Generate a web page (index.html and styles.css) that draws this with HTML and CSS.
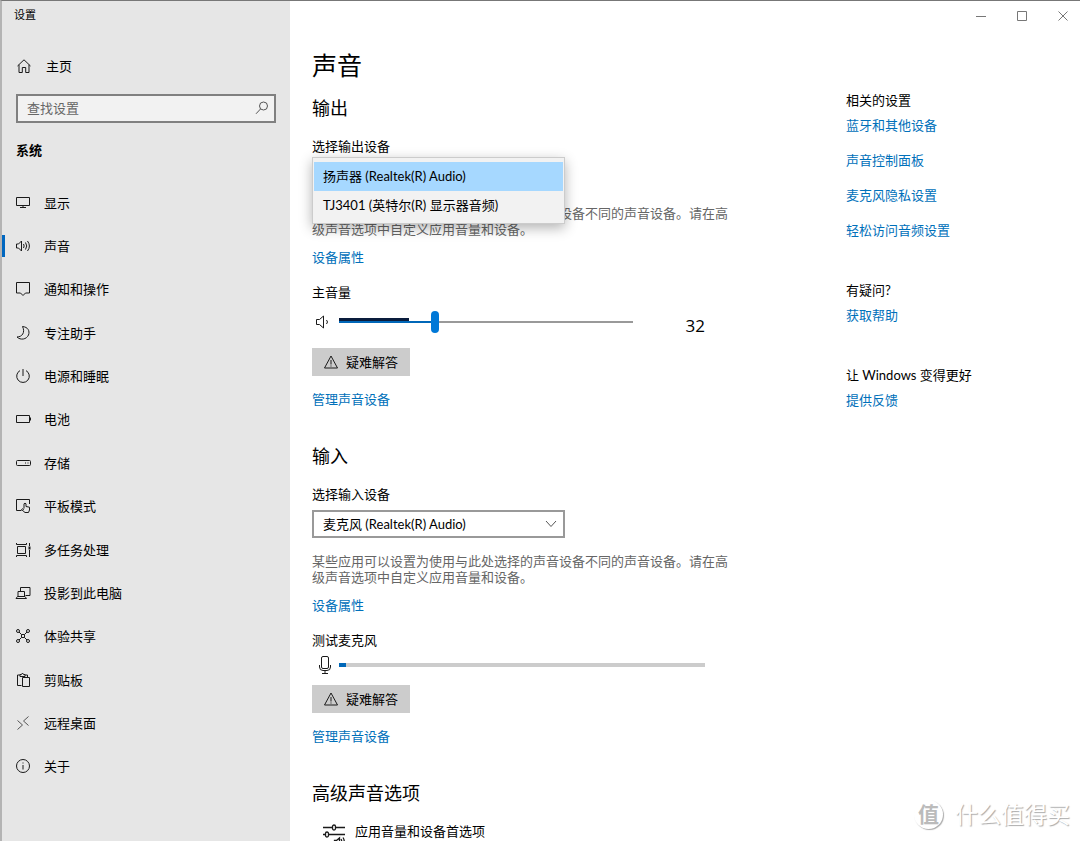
FILE: index.html
```html
<!DOCTYPE html>
<html lang="zh-CN">
<head>
<meta charset="utf-8">
<title>设置</title>
<link rel="stylesheet" href="styles.css">
</head>
<body>
<div class="window">
  <aside class="sidebar">
    <div class="app-title">设置</div>
    <a class="home" href="#"><svg class="icon" viewBox="0 0 16 16"><path d="M1.500 8 8 1.800 14.500 8M3 6.800V14.500H6.300V9.500H9.700V14.500H13V6.800"/></svg>主页</a>
    <div class="search">
      <input type="text" placeholder="查找设置" aria-label="查找设置">
      <svg class="icon search-icon" viewBox="0 0 16 16"><circle cx="9.500" cy="6" r="4"/><path d="M6.500 9 2 13.800"/></svg>
    </div>
    <h2 class="group">系统</h2>
    <nav class="nav">
      <a href="#"><svg class="icon" viewBox="0 0 16 16"><path d="M1.500 2.500H14.500V10.500H1.500ZM8 10.500V12.500M5 12.500H11"/></svg>显示</a>
      <a href="#" class="active"><svg class="icon" viewBox="0 0 16 16"><path d="M1.500 6H3.500L6.500 3V13L3.500 10H1.500ZM8.500 6Q9.800 8 8.500 10M10.500 4.500Q13 8 10.500 11.500M12.500 3Q16.300 8 12.500 13"/></svg>声音</a>
      <a href="#"><svg class="icon" viewBox="0 0 16 16"><path d="M1.500 1.500H14.500V12H10.500L8 14.500 5.500 12H1.500Z"/></svg>通知和操作</a>
      <a href="#"><svg class="icon" viewBox="0 0 16 16"><path d="M7.500 1.500C13 2 15 6 13.500 10 11.500 14.500 5.500 15.500 2 12 7 12 10.500 7.500 7.500 1.500Z"/></svg>专注助手</a>
      <a href="#"><svg class="icon" viewBox="0 0 16 16"><path d="M8 1V8M5 2.600A6.300 6.300 0 1 0 11 2.600"/></svg>电源和睡眠</a>
      <a href="#"><svg class="icon" viewBox="0 0 16 16"><path d="M1.500 4.500H14.500V11.500H1.500ZM15.500 6.500V9.500"/></svg>电池</a>
      <a href="#"><svg class="icon" viewBox="0 0 16 16"><rect x="1.500" y="5.500" width="14" height="5" rx="1"/><path d="M10 8H11M12.500 8H13.500"/></svg>存储</a>
      <a href="#"><svg class="icon" viewBox="0 0 16 16"><path d="M6.500 12.500H1.500V1.500H14.500V6M9 10.500V5.800Q10 4.500 11 5.800V8.500L14.500 9.200V12L13.500 14.500H10L6.500 11.500Q7 10 9 11.500"/></svg>平板模式</a>
      <a href="#"><svg class="icon" viewBox="0 0 16 16"><path d="M2.500 4.500H10.500V11.500H2.500ZM1.500 1V2.500H11.500V1M1.500 15V13.500H11.500V15M14.500 1V4M14.500 8V15"/><path d="M14.500 4.500V7.500" stroke-width="2"/></svg>多任务处理</a>
      <a href="#"><svg class="icon" viewBox="0 0 16 16"><path d="M5.500 6V2.500H15V10.500H10.500M3 11.500V6.500H9.500V11.500M1 13.500H11.500L10 11.500H2.500Z"/></svg>投影到此电脑</a>
      <a href="#"><svg class="icon" viewBox="0 0 16 16"><circle cx="3" cy="3" r="1.500"/><circle cx="13" cy="3" r="1.500"/><circle cx="3" cy="13" r="1.500"/><circle cx="13" cy="13" r="1.500"/><path d="M4 4 6.500 6.500H9.500L12 4M4 12 6.500 9.500H9.500L12 12M6.500 6.500V9.500M9.500 6.500V9.500"/></svg>体验共享</a>
      <a href="#"><svg class="icon" viewBox="0 0 16 16"><path d="M6.500 13.500H2.500V3H5M10 3H12.500V5.500M5 4.500V2.500H6.500L7.500 1 8.500 2.500H10V4.500ZM7.500 5.500H14.500V14.500H7.500Z"/></svg>剪贴板</a>
      <a href="#"><svg class="icon thin" viewBox="0 0 16 16"><path d="M2.500 5.500 7.500 10 2.500 14.500M13.500 1.500 8.500 6 13.500 10.500"/></svg>远程桌面</a>
      <a href="#"><svg class="icon" viewBox="0 0 16 16"><circle cx="8" cy="8" r="6.500"/><path d="M8 7V11.500M8 4.500V5.500"/></svg>关于</a>
    </nav>
  </aside>

  <div class="page">
    <header class="window-controls">
      <button type="button" aria-label="最小化"><svg viewBox="0 0 10 10"><path d="M0 5.500H10"/></svg></button>
      <button type="button" aria-label="最大化"><svg viewBox="0 0 10 10"><path d="M.5.500H9.500V9.500H.5Z"/></svg></button>
      <button type="button" aria-label="关闭"><svg viewBox="0 0 10 10"><path d="M.5.500 9.500 9.500M9.500.500.5 9.500"/></svg></button>
    </header>
    <div class="columns">
      <main class="content">
        <h1>声音</h1>

        <section>
          <h2>输出</h2>
          <label class="label" for="output-device">选择输出设备</label>
          <div class="field">
            <select id="output-device" class="device-list" size="2">
              <option selected>扬声器 (Realtek(R) Audio)</option>
              <option>TJ3401 (英特尔(R) 显示器音频)</option>
            </select>
          </div>
          <p class="description">某些应用可以设置为使用与此处选择的声音设备不同的声音设备。请在高级声音选项中自定义应用音量和设备。</p>
          <a class="link" href="#">设备属性</a>
          <label class="label sub" for="volume">主音量</label>
          <div class="volume">
            <svg class="icon" viewBox="0 0 16 16"><path d="M1.500 5.500H4.500L8.500 2V14L4.500 10.500H1.500ZM11.500 6Q13.500 8 11.500 10"/></svg>
            <input id="volume" type="range" min="0" max="100" value="32">
            <output for="volume">32</output>
          </div>
          <button class="troubleshoot" type="button"><svg class="icon" viewBox="0 0 16 16"><path d="M8 2 14.500 14H1.500ZM8 6V10.500M8 11.500V12.500"/></svg>疑难解答</button>
          <a class="link" href="#">管理声音设备</a>
        </section>

        <section>
          <h2>输入</h2>
          <label class="label" for="input-device">选择输入设备</label>
          <div class="field">
            <select id="input-device" class="device-select"><option>麦克风 (Realtek(R) Audio)</option></select>
            <svg class="chevron" viewBox="0 0 12 8"><path d="M1 1 6 6.500 11 1"/></svg>
          </div>
          <p class="description">某些应用可以设置为使用与此处选择的声音设备不同的声音设备。请在高级声音选项中自定义应用音量和设备。</p>
          <a class="link" href="#">设备属性</a>
          <label class="label sub" for="mic-level">测试麦克风</label>
          <div class="mic">
            <svg class="mic-icon" viewBox="0 0 14 20"><rect x="3.500" y="1.500" width="7" height="12" rx="1.500"/><path d="M1.500 10V12Q1.500 15.500 5 15.500H9Q12.500 15.500 12.500 12V10M7 15.500V18.500M4 18.500H10"/></svg>
            <progress id="mic-level" max="100" value="2"></progress>
          </div>
          <button class="troubleshoot" type="button"><svg class="icon" viewBox="0 0 16 16"><path d="M8 2 14.500 14H1.500ZM8 6V10.500M8 11.500V12.500"/></svg>疑难解答</button>
          <a class="link" href="#">管理声音设备</a>
        </section>

        <section>
          <h2>高级声音选项</h2>
          <a class="advanced" href="#"><svg class="mixer" viewBox="0 0 24 24"><path d="M1 5.500H10M14 5.500H23M1 12.500H3M7 12.500H23"/><rect x="10.500" y="3" width="3" height="5" rx="1.500"/><rect x="3.500" y="10" width="3" height="5" rx="1.500"/><path d="M12.500 18.500H14.500L17.500 16V23L14.500 20.500H12.500ZM19 17Q20.500 19.500 19 22M21 15.500Q23.500 19.500 21 23"/></svg>应用音量和设备首选项</a>
        </section>
      </main>

      <aside class="related">
        <section>
          <h3>相关的设置</h3>
          <a class="link" href="#">蓝牙和其他设备</a>
          <a class="link" href="#">声音控制面板</a>
          <a class="link" href="#">麦克风隐私设置</a>
          <a class="link" href="#">轻松访问音频设置</a>
        </section>
        <section>
          <h3>有疑问?</h3>
          <a class="link" href="#">获取帮助</a>
        </section>
        <section>
          <h3>让 Windows 变得更好</h3>
          <a class="link" href="#">提供反馈</a>
        </section>
      </aside>
    </div>
  </div>
</div>
<div class="watermark"><span class="badge">值</span><span>什么值得买</span></div>
</body>
</html>
```

FILE: styles.css
```css
* { box-sizing: border-box; }

body {
  margin: 0;
  height: 100vh;
  overflow: hidden;
  position: relative;
  background: #fff;
  color: #000;
  font: 13px/18px Lato, "Noto Sans CJK SC", sans-serif;
}

h1, h2, h3, p { margin: 0; font-weight: 400; }
a { color: inherit; text-decoration: none; }
input, select, button { font: inherit; color: inherit; border-radius: 0; }

svg { fill: none; stroke: #1a1a1a; stroke-width: 1; flex: none; }
.icon { width: 16px; height: 16px; }
.thin { stroke: #555; }

.window {
  display: flex;
  height: 100%;
  overflow: hidden;
  border-top: 1px solid #777;
  border-left: 2px solid #b4b4b4;
}

/* Sidebar */
.sidebar {
  flex: none;
  width: 288px;
  background: #e6e6e6;
}
.app-title { padding: 5px 12px; font-size: 11px; }
.home {
  display: flex;
  align-items: center;
  gap: 14px;
  margin-top: 28px;
  padding-left: 14px;
}
.search { position: relative; margin: 19px 14px 0; }
.search input {
  display: block;
  width: 100%;
  height: 29px;
  padding: 0 32px 2px 9px;
  border: 2px solid #808080;
  background: #f2f2f2;
}
.search input::placeholder { color: #666; opacity: 1; }
.search-icon { position: absolute; right: 6px; top: 6px; stroke: #555; }
.group {
  margin: 18px 14px 0;
  font-size: 13px;
  font-weight: 700;
}
.nav {
  display: grid;
  grid-auto-rows: 1fr;
  min-height: 607px;
  margin-top: 22px;
}
.nav a {
  position: relative;
  display: flex;
  align-items: center;
  gap: 13px;
  padding-left: 13px;
}
.nav .active::before {
  content: "";
  position: absolute;
  left: 0;
  width: 3px;
  height: 22px;
  background: #0067c0;
}

/* Page */
.page { flex: 1; min-width: 0; }
.window-controls { display: flex; justify-content: flex-end; gap: 7px; height: 29px; }
.window-controls button {
  display: grid;
  place-items: center;
  width: 34px;
  padding: 0;
  border: 0;
  background: none;
}
.window-controls svg { width: 10px; height: 10px; stroke: #777; }
.columns { display: flex; padding-left: 22px; }
.content { flex: 0 1 534px; padding-top: 15px; }
.content section { margin-bottom: 36px; }
.content section:last-child { margin-bottom: 0; }

h1 { margin-bottom: 11px; font-size: 25px; line-height: 40px; }
.content h2 { margin-bottom: 17px; font-size: 18px; line-height: 24px; }
.label { display: block; }
.label.sub { margin-top: 17px; }
.field { position: relative; width: 253px; height: 28px; margin-top: 7px; }
.device-select {
  appearance: none;
  width: 100%;
  height: 100%;
  padding: 0 30px 0 9px;
  border: 2px solid #999;
  background: #fff;
}
.chevron { position: absolute; right: 8px; top: 10px; width: 12px; height: 8px; stroke: #555; pointer-events: none; }
.device-list {
  appearance: none;
  position: absolute;
  left: 0;
  top: -5px;
  width: 100%;
  height: 67px;
  padding: 4px 1px;
  overflow: hidden;
  border: 1px solid #ccc;
  outline: 0;
  background: #f2f2f2;
  box-shadow: 0 4px 12px rgb(0 0 0 / 30%);
}
.device-list option { min-height: 28px; padding: 4px 9px 6px; line-height: 18px; }
.device-list option:checked { background: #a6d8ff linear-gradient(#a6d8ff, #a6d8ff); color: #000; }

.description {
  width: 420px;
  max-width: 100%;
  margin: 15px 0 11px;
  color: #666;
  line-height: 16px;
}
.link { display: block; width: fit-content; color: #0070ba; }

.volume, .mic { display: flex; align-items: center; width: 393px; }
.volume { height: 28px; margin-top: 7px; }
.volume .icon { margin: 0 8px 0 3px; }
.volume input {
  appearance: none;
  width: 294px;
  height: 22px;
  margin: 0;
  background:
    linear-gradient(#0067b8, #0067b8) 0 10px / 95px 2px no-repeat,
    linear-gradient(#0a1c3c, #0a1c3c) 0 7px / 70px 3px no-repeat,
    linear-gradient(#999, #999) 0 10px / 100% 2px no-repeat;
}
.volume input::-webkit-slider-thumb {
  appearance: none;
  width: 8px;
  height: 22px;
  border-radius: 4px;
  background: #0078d7;
}
.volume output { margin: 8px 0 0 auto; font-family: "Open Sans", sans-serif; font-size: 17px; }

.mic { height: 24px; margin-top: 4px; }
.mic-icon { width: 14px; height: 20px; margin: 0 7px 0 6px; }
.mic progress { appearance: none; flex: 1; height: 4px; border: 0; background: #ccc; }
.mic progress::-webkit-progress-bar { background: #ccc; }
.mic progress::-webkit-progress-value { background: #0067b8; }

.troubleshoot {
  display: flex;
  align-items: center;
  gap: 7px;
  height: 28px;
  margin: 12px 0 14px;
  padding: 0 12px 0 11px;
  border: 0;
  background: #ccc;
}
.mic + .troubleshoot { margin-top: 8px; }
.advanced { display: flex; align-items: flex-start; gap: 9px; height: 24px; padding-left: 10px; }
.mixer { width: 24px; height: 24px; stroke-width: 1.3; }

.related { padding-top: 61px; }
.related section { display: grid; gap: 17px; margin-bottom: 42px; }
.related h3 { margin-bottom: -10px; font-size: 13px; }

/* Watermark */
.watermark {
  position: absolute;
  right: 10px;
  bottom: 11px;
  display: flex;
  align-items: center;
  gap: 12px;
  color: #fff;
  font-size: 23px;
  line-height: 32px;
  text-shadow: 1px 1px 1px #aaa;
}
.badge {
  width: 29px;
  height: 29px;
  border-radius: 50%;
  box-shadow: 1px 1px 1px #aaa;
  color: #bbb;
  font-size: 21px;
  font-weight: 700;
  line-height: 28px;
  text-align: center;
  text-shadow: none;
}
```
